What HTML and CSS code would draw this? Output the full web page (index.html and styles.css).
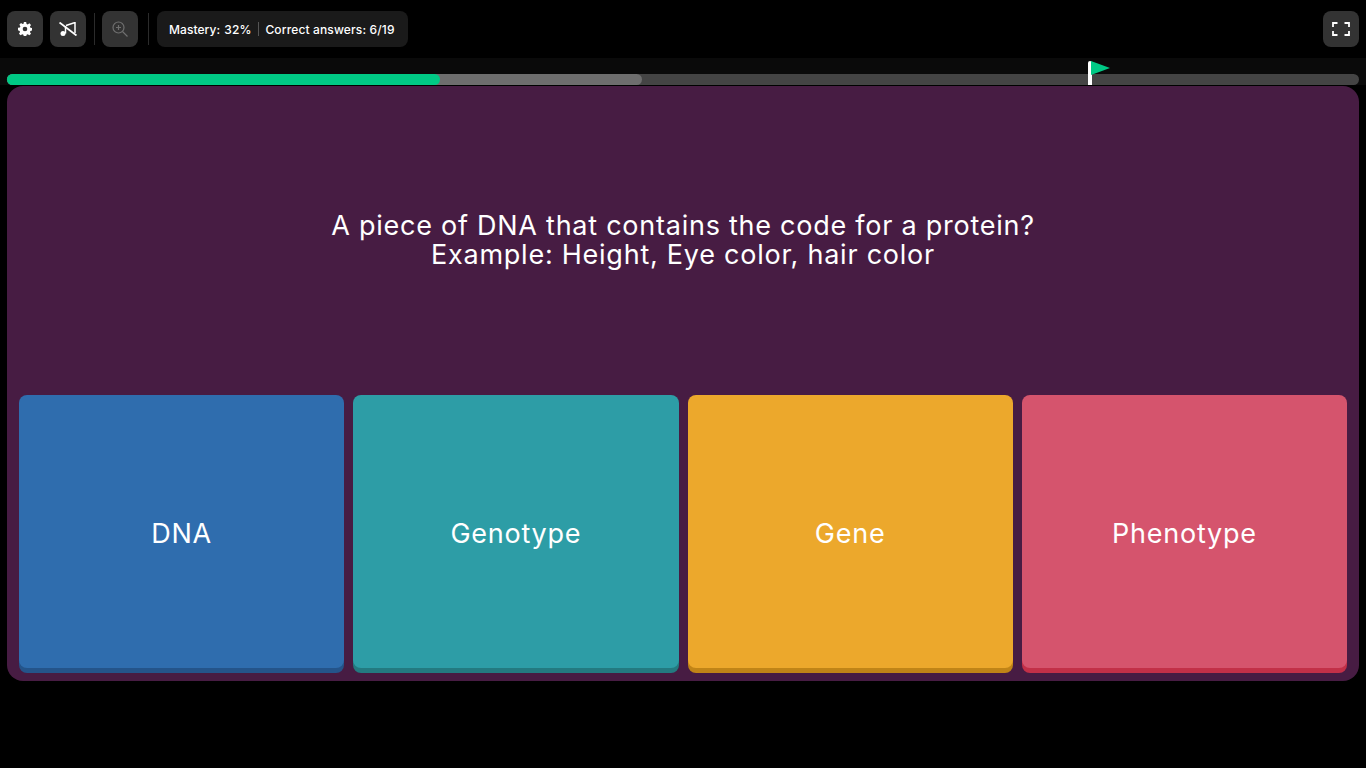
FILE: index.html
```html
<!DOCTYPE html>
<html lang="en">
<head>
    <meta charset="UTF-8">
    <meta name="viewport" content="width=device-width, initial-scale=1.0">
    <title>Quiz</title>
    <link rel="stylesheet" href="styles.css">
</head>
<body>

    <!-- Top Bar -->
    <div class="top-bar">
        <button class="icon-btn" aria-label="Settings">
            <svg width="14" height="14" viewBox="0 0 24 24"><path fill="#fff" fill-rule="evenodd" d="M10 0h4l.7 3.300 2 .8 2.800-1.800 2.800 2.800-1.800 2.800.8 2 3.300.7v4l-3.300.7-.8 2 1.800 2.800-2.800 2.800-2.800-1.800-2 .8-.7 3.300h-4l-.7-3.300-2-.8-2.800 1.800-2.800-2.800 1.800-2.800-.8-2L0 14v-4l3.300-.7.8-2-1.800-2.800 2.800-2.800 2.800 1.800 2-.8zM12 8a4 4 0 1 0 0 8 4 4 0 0 0 0-8z"/></svg>
        </button>
        <button class="icon-btn" aria-label="Music off">
            <svg width="18" height="14" viewBox="0 0 18 14"><path fill="none" stroke="#fff" stroke-width="1.800" d="M.5.500l17 13"/><path fill="none" stroke="#fff" stroke-width="1.500" d="M7 3.500l9-3M16 0v11M6.500 4v7.500"/><circle cx="4" cy="11.500" r="2.500" fill="#fff"/></svg>
        </button>
        <span class="divider"></span>
        <button class="icon-btn zoom-btn" aria-label="Zoom in">
            <svg width="16" height="16" viewBox="0 0 16 16"><g fill="none" stroke="#6f6f6f" stroke-width="1.200"><circle cx="6.500" cy="6.500" r="5.500"/><path d="M10.500 10.500l5 5M6.500 4v5M4 6.500h5"/></g></svg>
        </button>
        <span class="divider"></span>
        <div class="stats">
            <span>Mastery: <span class="gap">32%</span></span>
            <span class="stats-sep"></span>
            <span class="answers">Correct answers: 6/19</span>
        </div>
        <button class="icon-btn fullscreen" aria-label="Fullscreen">
            <svg width="18" height="14" viewBox="0 0 18 14"><path fill="none" stroke="#fff" stroke-width="1.800" d="M5.500 1H1v4M12.500 1H17v4M5.500 13H1V9M12.500 13H17V9"/></svg>
        </button>
    </div>

    <!-- Progress -->
    <div class="progress-strip">
        <div class="track">
            <div class="attempted"></div>
            <div class="mastered"></div>
            <div class="goal">
                <svg width="19" height="14" viewBox="0 0 19 14"><path fill="#00c985" d="M0 0l19 7-19 7z"/></svg>
            </div>
        </div>
    </div>

    <!-- Question -->
    <div class="card">
        <div class="question">
            <p>A piece of DNA that contains the code for a protein?<br>Example: Height, Eye color, hair color</p>
        </div>
        <div class="options">
            <div class="option blue">DNA</div>
            <div class="option teal">Genotype</div>
            <div class="option yellow">Gene</div>
            <div class="option red">Phenotype</div>
        </div>
    </div>

</body>
</html>
```

FILE: styles.css
```css
* {
    box-sizing: border-box;
}
body {
    margin: 0;
    height: 768px;
    overflow: hidden;
    background: #000;
    color: #fff;
    font-family: "Inter", "Open Sans", sans-serif;
}
.top-bar {
    display: flex;
    align-items: center;
    height: 58px;
    padding: 11px 7px;
}
.icon-btn {
    display: flex;
    align-items: center;
    justify-content: center;
    width: 36px;
    height: 36px;
    margin-right: 7px;
    padding: 0;
    background: #333;
    border: none;
    border-radius: 8px;
}
.divider {
    width: 1px;
    height: 32px;
    margin: 0 7px 0 1px;
    background: #2b2b2b;
}
.zoom-btn {
    margin-right: 9px;
}
.stats {
    display: flex;
    align-items: center;
    height: 36px;
    margin-left: 1px;
    padding: 0 13px 0 12px;
    background: #1a1a1a;
    border-radius: 8px;
    font-size: 12px;
    font-weight: 500;
    letter-spacing: 0.06px;
    white-space: nowrap;
}
.gap {
    margin-left: 1px;
}
.stats-sep {
    width: 1px;
    height: 14px;
    margin: 0 6px 0 7px;
    background: #555;
}
.answers {
    letter-spacing: 0.14px;
}
.fullscreen {
    margin-left: auto;
    margin-right: 0;
}
.progress-strip {
    height: 27px;
    padding: 16px 7px 0;
    background: #0a0a0a;
}
.track {
    position: relative;
    height: 11px;
    background: #444;
    border-radius: 6px;
}
.attempted, .mastered {
    position: absolute;
    top: 0;
    left: 0;
    height: 100%;
    border-radius: 6px;
}
.attempted {
    width: 635px;
    background: #6e6e6e;
}
.mastered {
    width: 433px;
    background: #00c985;
}
.goal {
    position: absolute;
    left: 1081px;
    top: -13px;
    width: 4px;
    height: 24px;
    background: #fff;
    border-radius: 2px 2px 0 0;
}
.goal svg {
    position: absolute;
    left: 3px;
    top: 0;
    display: block;
}
.card {
    display: flex;
    flex-direction: column;
    height: 595px;
    margin: 1px 7px 0;
    padding: 0 12px 8px;
    background: #471c43;
    border-radius: 16px;
}
.question {
    display: flex;
    align-items: center;
    justify-content: center;
    flex: 1;
    padding-bottom: 1px;
    text-align: center;
    font-size: 27px;
    letter-spacing: 0.75px;
    line-height: 29px;
}
.question p {
    margin: 0;
}
.options {
    display: grid;
    grid-template-columns: repeat(4, 1fr);
    gap: 9px;
    height: 278px;
    padding-bottom: 5px;
}
.option {
    display: flex;
    align-items: center;
    justify-content: center;
    padding-top: 3px;
    border-radius: 8px;
    font-size: 27px;
    letter-spacing: 0.75px;
}
.blue {
    background: #2f6dae;
    box-shadow: 0 5px 0 #24548a;
}
.teal {
    background: #2d9da6;
    box-shadow: 0 5px 0 #237a80;
}
.yellow {
    background: #eca82c;
    box-shadow: 0 5px 0 #c08417;
}
.red {
    background: #d5546d;
    box-shadow: 0 5px 0 #c23048;
}
```
